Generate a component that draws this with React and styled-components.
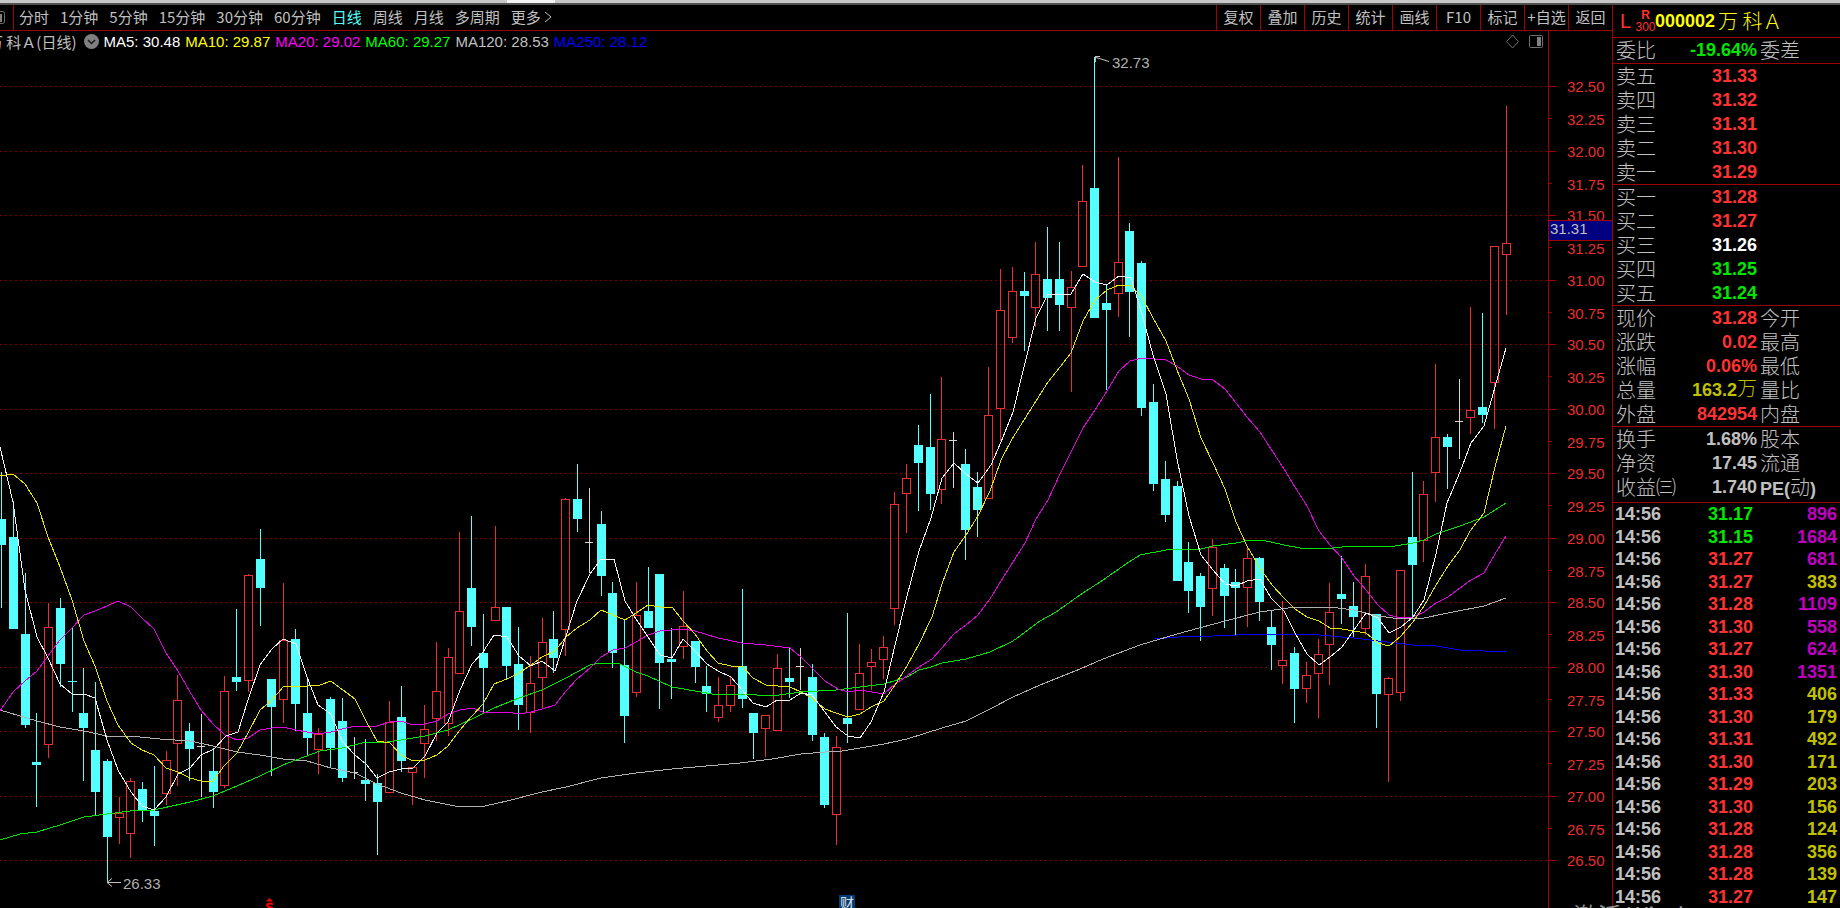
import React, { useState } from "react";
import styled, { createGlobalStyle } from "styled-components";

const GlobalStyle = createGlobalStyle`
  * {
    box-sizing: border-box;
  }

  body {
    margin: 0;
    background: #000;
    color: #c0c0c0;
    font-family: "Liberation Sans", "Noto Sans CJK SC", sans-serif;
  }
`;

const colors = {
  line: "#a00000",
  up: "#ff3232",
  down: "#00e600",
  flat: "#ffffff",
  text: "#c0c0c0",
  yellow: "#c0c000",
  purple: "#c000c0",
  cyan: "#54ffff",
};

const Page = styled.div`
  display: flex;
  flex-direction: column;
  height: 100vh;
  overflow: hidden;
`;

const WindowEdge = styled.div`
  flex: none;
  display: flex;
  height: 5px;
  background: #c8c8c8;
  border-bottom: 2px solid #505050;
`;

const EdgeTab = styled.span`
  width: 48px;
  margin-left: 507px;
  background: #f4f4f4;
`;

const Body = styled.div`
  flex: 1;
  display: flex;
  min-height: 0;
`;

const Main = styled.main`
  flex: 1;
  display: flex;
  flex-direction: column;
  min-width: 0;
  overflow: hidden;
`;

const Toolbar = styled.nav`
  flex: none;
  display: flex;
  justify-content: space-between;
  height: 26px;
  border-bottom: 1px solid ${colors.line};
`;

const Periods = styled.div`
  display: flex;
  align-items: center;
  gap: 11px;
`;

const ToolButton = styled.button`
  padding: 0 0 2px;
  border: 0;
  background: none;
  color: ${({ $active }) => ($active ? colors.cyan : colors.text)};
  font: 15px/22px "Noto Sans CJK SC", sans-serif;
  white-space: nowrap;
  cursor: pointer;
`;

const PanelToggle = styled.button`
  display: flex;
  align-items: center;
  align-self: stretch;
  width: 14px;
  margin-right: -6px;
  padding: 0;
  border: 0;
  border-right: 1px solid ${colors.line};
  background: none;
`;

const Actions = styled.div`
  display: flex;
`;

const ActionButton = styled(ToolButton)`
  width: 44px;
  border-left: 1px solid ${colors.line};
`;

const InfoRow = styled.div`
  flex: none;
  display: flex;
  justify-content: space-between;
  height: 21px;
  line-height: 21px;
`;

const Legend = styled.div`
  display: flex;
  align-items: center;
  gap: 5px;
  font-size: 15px;
  white-space: nowrap;
`;

const StockName = styled.span`
  margin-left: -12px;
  font-family: "Noto Sans CJK SC", sans-serif;
`;

const RoundButton = styled.button`
  display: flex;
  margin: 0 0 0 2px;
  padding: 0;
  border: 0;
  background: none;
`;

const LegendItem = styled.span`
  color: ${({ $color }) => $color};
`;

const ChartTools = styled.div`
  display: flex;
  align-items: center;
  gap: 8px;
`;

const IconButton = styled.button`
  display: flex;
  padding: 0;
  border: 0;
  background: none;
`;

const AxisCap = styled.div`
  align-self: stretch;
  width: 64px;
  margin-left: -4px;
  border-left: 1px solid ${colors.line};
`;

const ChartArea = styled.div`
  flex: 1;
  display: flex;
  justify-content: flex-end;
  min-height: 0;
  overflow: hidden;

  svg {
    flex: none;
    font-size: 15px;
  }
`;

const Sidebar = styled.aside`
  flex: none;
  width: 228px;
  border-left: 1px solid ${colors.line};
  overflow: hidden;
`;

const StockHeader = styled.header`
  display: flex;
  align-items: center;
  height: 33px;
  padding-left: 7px;
  border-bottom: 1px solid ${colors.line};
  color: ${colors.up};
`;

const MarginMark = styled.span`
  width: 16px;
  font-size: 20px;
`;

const IndexMark = styled.span`
  display: flex;
  flex-direction: column;
  align-items: center;
  width: 19px;
  font-size: 12px;
  line-height: 12px;
`;

const StockCode = styled.span`
  color: #ffff00;
  font-size: 18px;
  font-weight: bold;
`;

const StockTitle = styled.h1`
  margin: 0 0 0 3px;
  color: #ffff00;
  font: 300 20px/32px "Noto Sans CJK SC", sans-serif;
`;

const QuoteTable = styled.table`
  width: 100%;
  table-layout: fixed;
  border-collapse: separate;
  border-spacing: 0;
  border-bottom: 1px solid ${colors.line};
  padding-bottom: ${({ $gap }) => $gap || 0}px;

  th,
  td {
    height: 24px;
    padding: 0;
    line-height: 24px;
    white-space: nowrap;
  }

  th {
    padding-left: 3px;
    font-family: "Noto Sans CJK SC", sans-serif;
    font-size: 20px;
    font-weight: 300;
    text-align: left;
  }
`;

const Col = styled.col`
  width: ${({ $width }) => $width}px;
`;

const Value = styled.td`
  color: ${({ $color }) => $color};
  font-size: 18px;
  font-weight: bold;
  text-align: right;
`;

const Unit = styled.span`
  font: 300 20px/20px "Noto Sans CJK SC", sans-serif;
`;

const PeLabel = styled.span`
  font: bold 18px/20px "Liberation Sans", "Noto Sans CJK SC", sans-serif;
`;

const TickTable = styled.table`
  width: 100%;
  table-layout: fixed;
  border-collapse: collapse;
  font-size: 18px;
  font-weight: bold;

  tr {
    height: 22px;
  }

  tr:nth-child(even) {
    height: 23px;
  }

  td {
    padding: 0 0 0 2px;
    line-height: 22px;
  }
`;

const TickPrice = styled.td`
  color: ${({ $color }) => $color};
  text-align: right;
`;

const TickVolume = styled(TickPrice)`
  && {
    padding-right: 3px;
  }
`;

const Watermark = styled.div`
  position: absolute;
  right: 111px;
  bottom: -23px;
  height: 32px;
  color: #8c8c8c;
  font: 24px/32px "Noto Sans CJK SC", sans-serif;
  white-space: nowrap;
`;

const periods = ["分时", "1分钟", "5分钟", "15分钟", "30分钟", "60分钟", "日线", "周线", "月线", "多周期"];
const actions = ["复权", "叠加", "历史", "统计", "画线", "F10", "标记", "+自选", "返回"];

const averages = [
  ["MA5: 30.48", "#ffffff"],
  ["MA10: 29.87", "#ffff00"],
  ["MA20: 29.02", "#ff00ff"],
  ["MA60: 29.27", "#00ff00"],
  ["MA120: 28.53", "#c0c0c0"],
  ["MA250: 28.12", "#0000ff"],
];

const { up, down, flat, text, yellow, purple } = colors;

const ratio = [["委比", "-19.64%", down, "委差"]];

const sells = [
  ["卖五", "31.33", up],
  ["卖四", "31.32", up],
  ["卖三", "31.31", up],
  ["卖二", "31.30", up],
  ["卖一", "31.29", up],
];

const buys = [
  ["买一", "31.28", up],
  ["买二", "31.27", up],
  ["买三", "31.26", flat],
  ["买四", "31.25", down],
  ["买五", "31.24", down],
];

const stats = [
  ["现价", "31.28", up, "今开"],
  ["涨跌", "0.02", up, "最高"],
  ["涨幅", "0.06%", up, "最低"],
  ["总量", <>163.2<Unit>万</Unit></>, yellow, "量比"],
  ["外盘", "842954", up, "内盘"],
];

const finance = [
  ["换手", "1.68%", text, "股本"],
  ["净资", "17.45", text, "流通"],
  ["收益㈢", "1.740", text, <PeLabel>PE(<Unit>动</Unit>)</PeLabel>],
];

const ticks = [
  ["31.17", 896, down],
  ["31.15", 1684, down],
  ["31.27", 681],
  ["31.27", 383],
  ["31.28", 1109],
  ["31.30", 558],
  ["31.27", 624],
  ["31.30", 1351],
  ["31.33", 406],
  ["31.30", 179],
  ["31.31", 492],
  ["31.30", 171],
  ["31.29", 203],
  ["31.30", 156],
  ["31.28", 124],
  ["31.28", 356],
  ["31.28", 139],
  ["31.27", 147],
];

// kind (u: up, d: down, x: open equals close), high, body top, body bottom, low
const candles = [
  "d 472 519 545 608", "d 501 537 629 629", "d 573 634 725 728", "d 713 762 765 807", "u 603 627 745 758",
  "d 598 608 664 687", "d 628 681 682 712", "d 668 713 728 781", "d 682 750 792 815", "d 759 761 837 883",
  "u 797 813 818 844", "u 778 781 834 858", "d 782 789 811 822", "d 766 811 816 846", "u 751 760 794 805",
  "u 675 700 744 786", "d 723 731 749 781", "x 714 746 746 797", "d 748 771 792 808", "u 676 691 786 788",
  "d 609 677 682 691", "u 574 575 681 692", "d 529 559 588 626", "d 679 679 707 776", "u 583 640 700 723",
  "d 629 639 704 731", "d 679 713 738 756", "u 728 734 750 774", "d 697 699 748 768", "d 698 721 778 782",
  "x 737 772 772 779", "d 739 780 784 801", "d 774 783 802 855", "u 701 722 793 793", "d 686 717 761 772",
  "u 767 767 773 805", "u 705 729 744 778", "u 642 691 719 741", "u 648 657 724 736", "u 532 611 674 674",
  "d 516 588 627 646", "d 614 653 668 713", "u 526 607 621 621", "d 607 607 666 679", "d 627 664 705 730",
  "u 656 683 713 733", "u 618 642 678 709", "d 611 639 658 673", "u 498 499 630 656", "d 464 499 519 532",
  "x 488 542 542 573", "d 511 524 576 596", "d 582 593 653 668", "d 620 665 716 743", "u 582 615 693 697",
  "d 567 611 628 628", "d 574 574 663 709", "d 628 659 662 699", "u 591 626 647 659", "d 641 641 667 683",
  "d 666 686 694 712", "u 677 705 718 722", "u 677 685 706 712", "d 589 666 699 708", "d 713 713 733 759",
  "u 715 715 729 757", "u 654 668 731 731", "d 648 678 682 698", "x 648 666 666 690", "d 664 677 735 741",
  "d 733 737 805 808", "u 736 747 815 845", "d 613 718 724 743", "u 644 673 710 710", "u 649 662 667 690",
  "u 636 647 660 679", "u 492 504 609 625", "u 464 478 494 533", "d 425 445 463 511", "d 394 447 494 510",
  "u 377 439 490 504", "x 432 440 440 488", "d 449 464 530 560", "d 472 487 510 537", "u 367 415 499 499",
  "u 269 310 409 441", "u 267 291 338 343", "d 272 291 296 351", "u 242 274 308 327", "d 227 279 298 331",
  "d 242 279 305 331", "u 271 287 308 392", "u 165 201 267 267", "d 57 188 318 318", "d 285 303 310 390",
  "u 157 262 294 317", "d 223 231 292 337", "d 261 263 408 416", "d 384 402 484 491", "d 461 479 515 522",
  "d 481 486 581 581", "d 542 562 591 613", "d 573 576 607 641", "u 539 547 589 616", "d 564 568 596 628",
  "d 569 582 588 635", "u 547 558 588 627", "d 557 558 602 621", "d 610 627 645 670", "u 601 660 666 684",
  "d 647 653 689 723", "u 662 675 689 703", "u 639 654 674 718", "u 583 612 645 685", "d 556 594 599 624",
  "d 582 606 617 638", "u 564 576 629 635", "d 614 614 694 728", "u 677 678 695 782", "u 570 570 693 701",
  "d 472 537 565 618", "u 481 494 541 562", "u 364 437 473 502", "d 434 437 447 489", "x 379 421 421 459",
  "u 307 410 418 434", "d 313 407 415 423", "u 246 246 383 429", "u 106 243 255 315",
].map((row) => {
  const [kind, ...levels] = row.split(" ");
  const [high, top, bottom, low] = levels.map(Number);
  return { kind, high, top, bottom, low };
});

const lines = [
  {
    name: "MA250",
    color: "#0000ff",
    points:
      "1154,639 1178,637 1213,636 1236,635 1295,634 1319,635 1354,638 1378,641 1413,645 1436,646 1460,650 1484,651 1506,651",
  },
  {
    name: "MA120",
    color: "#b0b0b0",
    points:
      "0,710 37,721 60,727 84,731 107,736 140,737 160,739 190,741 213,746 237,752 260,755 283,759 307,761 331,768 355,773 377,784 401,793 425,800 455,806 485,806 507,801 542,792 566,787 601,778 636,773 672,769 718,765 740,763 772,759 801,754 825,752 842,751 860,748 884,744 907,739 942,728 966,721 990,709 1013,697 1040,685 1080,669 1103,659 1140,645 1177,634 1225,621 1260,612 1295,607 1330,607 1354,610 1378,616 1401,619 1424,618 1448,613 1484,606 1506,598",
  },
  {
    name: "MA60",
    color: "#00e600",
    points:
      "0,840 20,834 37,832 60,825 84,817 107,814 130,811 154,810 190,802 213,796 237,786 260,776 283,765 296,760 320,751 342,748 366,742 380,743 401,740 413,738 425,736 448,730 472,719 494,708 519,698 542,690 566,678 590,665 601,663 620,664 636,672 648,676 672,687 695,691 718,695 742,694 772,696 801,692 836,690 860,687 884,684 907,677 919,670 931,667 942,663 966,659 990,652 1013,641 1040,621 1056,612 1080,595 1103,580 1126,564 1140,555 1166,550 1201,549 1213,546 1236,543 1250,540 1262,540 1284,545 1300,548 1324,549 1342,547 1366,546 1389,547 1413,543 1424,540 1436,534 1460,526 1484,517 1506,503",
  },
  {
    name: "MA20",
    color: "#e600e6",
    points:
      "0,711 13,692 25,681 37,671 48,656 60,640 72,628 84,615 95,611 107,606 118,601 131,607 142,618 154,629 166,653 178,671 190,692 201,710 213,724 225,735 237,740 248,738 260,730 272,728 283,727 296,730 307,732 318,734 331,732 342,729 355,726 377,726 390,722 401,721 413,725 425,724 437,721 448,714 460,710 472,708 483,712 507,712 519,714 531,712 542,709 555,705 566,691 577,679 590,668 601,657 613,650 625,648 636,642 648,635 660,631 683,629 695,631 718,638 742,643 766,645 790,648 801,657 812,668 825,681 838,689 848,692 860,690 884,694 895,684 907,676 919,667 932,659 942,648 954,634 966,625 978,615 990,599 1001,581 1013,562 1025,543 1036,519 1048,500 1060,474 1071,452 1083,428 1095,410 1107,391 1119,371 1130,361 1142,358 1166,360 1177,366 1189,375 1201,379 1213,380 1225,389 1236,403 1247,417 1260,432 1271,449 1284,469 1295,487 1307,506 1319,531 1330,545 1342,558 1354,576 1366,590 1378,605 1389,615 1401,618 1413,617 1424,612 1436,603 1448,597 1460,588 1471,580 1484,573 1495,554 1506,536",
  },
  {
    name: "MA10",
    color: "#e6e600",
    points:
      "0,476 13,474 25,484 37,503 48,537 60,567 72,600 84,641 95,666 107,701 118,725 131,743 142,750 154,755 166,768 178,772 190,778 201,781 213,781 224,766 237,753 248,733 260,710 272,700 283,687 308,686 320,685 331,681 343,690 355,699 366,721 377,741 390,743 401,755 413,761 425,760 437,755 448,746 460,730 472,716 483,704 494,684 507,679 519,673 531,665 542,657 555,651 566,637 577,628 590,620 601,610 613,615 625,620 636,613 648,605 660,607 672,607 683,621 695,634 707,651 718,663 731,666 742,666 753,678 766,685 778,686 790,687 801,692 812,698 825,709 836,713 848,717 860,714 871,707 884,701 895,685 907,666 919,644 932,617 942,584 954,552 966,535 978,516 990,491 1001,460 1012,439 1024,420 1036,401 1048,382 1060,367 1071,353 1083,321 1095,300 1107,290 1119,285 1130,285 1142,297 1153,318 1166,341 1177,370 1189,399 1201,438 1213,463 1225,489 1236,522 1247,546 1260,568 1272,585 1284,598 1295,609 1307,617 1319,621 1330,628 1342,629 1354,631 1366,633 1378,643 1389,646 1401,636 1413,622 1424,606 1436,585 1448,566 1460,550 1470,531 1484,513 1495,467 1506,426",
  },
  {
    name: "MA5",
    color: "#f0f0f0",
    points:
      "0,447 13,502 25,590 37,637 48,658 60,684 72,694 84,694 95,698 107,740 118,770 131,792 142,806 154,810 166,797 178,774 190,768 201,755 214,749 226,736 238,732 248,700 260,665 272,649 283,639 296,644 307,677 318,705 331,714 342,741 355,755 366,764 377,778 389,772 401,769 413,768 425,756 437,733 448,722 460,690 472,664 483,652 494,635 507,637 519,656 531,666 542,661 555,671 566,636 577,601 590,574 601,559 614,559 625,601 636,619 648,637 660,655 672,658 683,639 695,651 707,664 718,671 731,677 742,690 753,703 766,707 777,700 790,700 801,693 812,695 825,712 836,727 848,736 860,738 871,722 884,692 895,645 907,596 919,551 931,518 942,478 954,463 966,474 978,483 991,465 1001,442 1013,412 1024,367 1036,318 1048,294 1071,294 1083,274 1095,282 1107,285 1119,276 1131,278 1142,314 1153,355 1166,394 1177,459 1189,516 1201,555 1213,570 1225,584 1236,586 1247,581 1260,579 1271,598 1284,611 1295,633 1307,654 1319,665 1330,657 1342,647 1354,630 1366,613 1378,618 1389,633 1401,627 1413,617 1424,600 1436,554 1447,503 1460,472 1471,443 1484,426 1495,387 1506,348",
  },
];

const gridPrices = Array.from({ length: 25 }, (_, i) => 32.5 - i * 0.25);
const priceY = (price) => Math.round(86 + (32.5 - price) * 129);

const Candle = ({ index, kind, high, top, bottom, low }) => {
  const x = Math.floor(1.5 + index * 11.755);

  if (kind === "x") {
    return (
      <g fill="#d8d8d8">
        <rect x={x} y={high} width="1" height={low - high} />
        <rect x={x - 4} y={top} width="8" height="1" />
      </g>
    );
  }
  if (kind === "d") {
    return (
      <g fill={colors.cyan}>
        <rect x={x} y={high} width="1" height={low - high} />
        <rect x={x - 4} y={top} width="9" height={Math.max(bottom - top, 1)} />
      </g>
    );
  }
  return (
    <g fill="#ec2e2e">
      <rect x={x} y={high} width="1" height={top - high} />
      <rect x={x} y={bottom} width="1" height={low - bottom} />
      <rect x={x - 3.5} y={top + 0.5} width="8" height={Math.max(bottom - top - 1, 1)} fill="none" stroke="#ec2e2e" />
    </g>
  );
};

const KLineChart = () => (
  <svg width="1612" height="856" viewBox="0 52 1612 856" role="img" aria-label="日线">
    <g shapeRendering="crispEdges">
      {gridPrices.map((price, i) => {
        const y = priceY(price) + 0.5;
        return (
          <g key={price} stroke={colors.line}>
            {i % 2 === 0 && <line x1="0" x2="1548" y1={y} y2={y} stroke="#800000" strokeDasharray="2 3" />}
            <line x1="1549" x2={i % 2 ? 1552 : 1556} y1={y} y2={y} />
          </g>
        );
      })}
      <line x1="1548.5" x2="1548.5" y1="52" y2="908" stroke={colors.line} />
      {candles.map((candle, i) => (
        <Candle key={i} index={i} {...candle} />
      ))}
      {lines.map(({ name, color, points }) => (
        <polyline key={name} points={points} fill="none" stroke={color} />
      ))}
    </g>
    <g fill="#e62e2e">
      {gridPrices.map((price, i) => (
        <text key={price} x="1567" y={priceY(price) + (i % 2 ? 7 : 6)}>
          {price.toFixed(2)}
        </text>
      ))}
    </g>
    <rect x="1549" y="220" width="63" height="20" fill="#000080" />
    <path d="M1549 220.5h63M1549 240.5h63" stroke={colors.line} />
    <text x="1550" y="234" fill={colors.text}>31.31</text>

    <g fill="none" stroke={colors.text}>
      <path d="M1095 56.5h5M1095.5 56v6M1096 57.5l13 4" />
      <path d="M107 882.5h14M112 878.5l-5 4l5 4" />
    </g>
    <text x="1112" y="68" fill="#b0b0b0">32.73</text>
    <text x="123" y="889" fill="#b0b0b0">26.33</text>

    <path d="M269.5 898l3.500 3.500h-7z" fill="#ff0000" />
    <path d="M273 904.500c-2-1.500-6-1-6 1s5 1.500 6 3" fill="none" stroke="#ff0000" strokeWidth="2" />
    <rect x="839" y="895" width="16" height="14" fill="#003c78" />
    <text x="840" y="908" fill="#e0e0e0" fontSize="14">财</text>
  </svg>
);

const Quotes = ({ rows, gap }) => (
  <QuoteTable $gap={gap}>
    <colgroup>
      <Col $width={70} />
      <Col $width={74} />
      <col />
    </colgroup>
    <tbody>
      {rows.map(([label, value, color, extra]) => (
        <tr key={label}>
          <th scope="row">{label}</th>
          <Value $color={color}>{value}</Value>
          <th>{extra}</th>
        </tr>
      ))}
    </tbody>
  </QuoteTable>
);

const App = () => {
  const [period, setPeriod] = useState("日线");

  return (
    <Page>
      <GlobalStyle />
      <WindowEdge>
        <EdgeTab />
      </WindowEdge>
      <Body>
        <Main>
          <Toolbar>
            <Periods>
              <PanelToggle aria-label="面板">
                <svg width="6" height="16" viewBox="0 0 6 16">
                  <path d="M0 1.500h2.500q2 0 2 2v8q0 2-2 2H0" fill="none" stroke="#707070" />
                  <rect x="0" y="4" width="2" height="8" fill="#808080" />
                </svg>
              </PanelToggle>
              {periods.map((name) => (
                <ToolButton key={name} $active={name === period} onClick={() => setPeriod(name)}>
                  {name}
                </ToolButton>
              ))}
              <ToolButton>
                更多{" "}
                <svg width="8" height="12" viewBox="0 0 8 12">
                  <path d="M1 1l6 5l-6 5" fill="none" stroke={colors.text} />
                </svg>
              </ToolButton>
            </Periods>
            <Actions>
              {actions.map((name) => (
                <ActionButton key={name}>{name}</ActionButton>
              ))}
            </Actions>
          </Toolbar>
          <InfoRow>
            <Legend>
              <StockName>万 科Ａ(日线)</StockName>
              <RoundButton aria-label="展开">
                <svg width="15" height="15" viewBox="0 0 15 15">
                  <circle cx="7.500" cy="7.500" r="7.500" fill="#808080" />
                  <path d="M4 6l3.500 3.500L11 6" fill="none" stroke="#181818" strokeWidth="1.500" />
                </svg>
              </RoundButton>
              {averages.map(([label, color]) => (
                <LegendItem key={label} $color={color}>
                  {label}
                </LegendItem>
              ))}
            </Legend>
            <ChartTools>
              <IconButton aria-label="标记">
                <svg width="15" height="15" viewBox="0 0 15 15">
                  <path d="M7.500 1l6 6.500l-6 6.500l-6-6.500z" fill="none" stroke="#707070" />
                </svg>
              </IconButton>
              <IconButton aria-label="侧栏">
                <svg width="16" height="15" viewBox="0 0 16 15">
                  <rect x="1.500" y="1.500" width="13" height="12" rx="1" fill="none" stroke="#707070" />
                  <rect x="9" y="3" width="4" height="9" fill="#808080" />
                </svg>
              </IconButton>
              <AxisCap />
            </ChartTools>
          </InfoRow>
          <ChartArea>
            <KLineChart />
          </ChartArea>
        </Main>
        <Sidebar>
          <StockHeader>
            <MarginMark>L</MarginMark>
            <IndexMark>
              <b>R</b>
              <span>300</span>
            </IndexMark>
            <StockCode>000002</StockCode>
            <StockTitle>万 科Ａ</StockTitle>
          </StockHeader>
          <Quotes rows={ratio} gap={1} />
          <Quotes rows={sells} />
          <Quotes rows={buys} />
          <Quotes rows={stats} />
          <Quotes rows={finance} gap={3} />
          <TickTable>
            <colgroup>
              <Col $width={60} />
              <Col $width={80} />
              <col />
            </colgroup>
            <tbody>
              {ticks.map(([price, volume, color], i) => (
                <tr key={i}>
                  <td>14:56</td>
                  <TickPrice $color={color || up}>{price}</TickPrice>
                  <TickVolume $color={volume > 500 ? purple : yellow}>{volume}</TickVolume>
                </tr>
              ))}
            </tbody>
          </TickTable>
        </Sidebar>
      </Body>
      <Watermark>激活 Windows</Watermark>
    </Page>
  );
};

export default App;
